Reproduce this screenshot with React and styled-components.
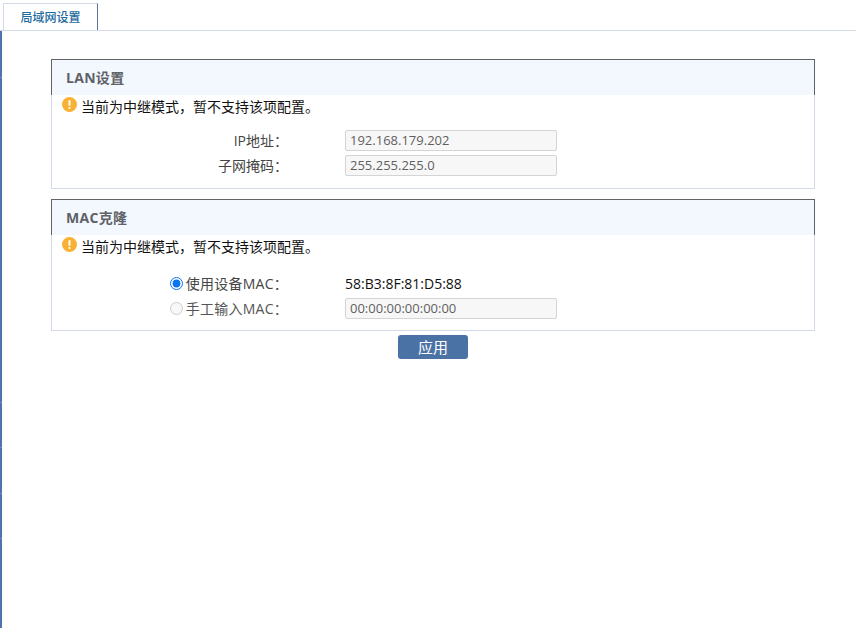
import React from "react";
import styled, { createGlobalStyle } from "styled-components";

const Global = createGlobalStyle`
  html, body { margin: 0; padding: 0; background: #fff; }
  body { font-family: "Open Sans", "Noto Sans CJK SC", sans-serif; font-size: 14px; color: #333; text-spacing-trim: space-all; }
`;
const Page = styled.div`height: 628px; width: 856px; overflow: hidden; display: flex; flex-direction: column;`;
const TabBar = styled.div`height: 31px; box-sizing: border-box; padding: 3px 0 0 3px; border-bottom: 1px solid #d5dbe6; display: flex;`;
const Tab = styled.div`
  width: 95px; height: 27px; box-sizing: border-box;
  border-top: 1px solid #d5dbe6; border-left: 1px solid #d5dbe6; border-right: 1px solid #5f7596;
  color: #1c6a9e; font-size: 12px; font-weight: 500; text-align: center; line-height: 25px;
  font-family: "Noto Sans CJK SC", sans-serif;
`;
const tick = (y) => `#4f74ad ${y}px, #7590bd ${y}px, #7590bd ${y + 1}px, #4f74ad ${y + 1}px`;
const Body = styled.div`
  flex: 1; padding: 28px 0 0 49px;
  border-left: 2px solid #4f74ad;
  border-image: linear-gradient(to bottom, ${[47, 371, 416, 461, 506].map(tick).join(", ")}) 1;
`;
const Panel = styled.section`
  width: 764px; box-sizing: border-box; height: ${p => p.$h}px; margin-bottom: 10px;
  border: 1px solid #d5dbe6; border-top: 0; display: flex; flex-direction: column;
`;
const PanelHead = styled.h2`
  margin: 0 -1px; height: 36px; box-sizing: border-box;
  background: #f3f7fe; border: 1px solid #5f6266; border-bottom: 0;
  font-size: 14px; font-weight: 700; color: #5f6266; padding-left: 14px; line-height: 35px; letter-spacing: 0.3px;
  font-family: "Open Sans", "Noto Sans CJK SC", sans-serif;
`;
const Notice = styled.div`
  display: flex; align-items: center; height: 21px; padding-left: 10px; gap: 4px; color: #111;
  font-size: 14px; font-family: "Noto Sans CJK SC", sans-serif;
  svg { margin-top: -2px; flex: none; }
`;
const Form = styled.div`padding-top: ${p => p.$top}px; display: flex; flex-direction: column; gap: 4px;`;
const Row = styled.div`display: flex; align-items: center; height: 21px;`;
const Label = styled.label`
  width: 236px; flex: none; font-size: 14px; line-height: 19px;
  display: flex; justify-content: flex-end; align-items: center;
  color: ${p => (p.$dim ? "#555" : "#444")};
  letter-spacing: ${p => (p.$wide ? "0.25px" : "0")};
`;
const Radio = styled.input`
  width: 13px; height: 13px; margin: 0 3px 0 0; accent-color: #0a75f0;
`;
const Field = styled.div`
  margin-left: 57px; width: 212px; height: 21px; box-sizing: border-box;
  background: #f7f7f7; border: 1px solid #d4d4d4; border-radius: 2px;
  color: #5f5f5f; font-size: 13px; line-height: 18px; padding-left: 4px;
`;
const Value = styled.div`margin-left: 57px; color: #111; font-size: 14px; line-height: 19px;`;
const Actions = styled.div`width: 764px; display: flex; justify-content: center; margin-top: -6px;`;
const Apply = styled.button`
  width: 70px; height: 24px; border: 0; border-radius: 3px; background: #4b72a5; color: #fff;
  font-size: 15px; font-family: "Noto Sans CJK SC", sans-serif; padding: 0; line-height: 24px;
`;

const Warn = () => (
  <svg width="15" height="15" viewBox="0 0 15 15">
    <circle cx="7.5" cy="7.5" r="7.5" fill="#f8b133" />
    <rect x="6.5" y="3" width="2" height="6" rx="1" fill="#fff" />
    <circle cx="7.5" cy="11" r="1.1" fill="#fff" />
  </svg>
);

export default function App() {
  return (
    <Page>
      <Global />
      <TabBar><Tab>局域网设置</Tab></TabBar>
      <Body>
        <Panel $h={130}>
          <PanelHead>LAN设置</PanelHead>
          <Notice><Warn />当前为中继模式，暂不支持该项配置。</Notice>
          <Form $top={14}>
            <Row><Label>IP地址：</Label><Field>192.168.179.202</Field></Row>
            <Row><Label>子网掩码：</Label><Field>255.255.255.0</Field></Row>
          </Form>
        </Panel>
        <Panel $h={132}>
          <PanelHead>MAC克隆</PanelHead>
          <Notice><Warn />当前为中继模式，暂不支持该项配置。</Notice>
          <Form $top={17}>
            <Row><Label $wide><Radio type="radio" name="m" defaultChecked />使用设备MAC：</Label><Value>58:B3:8F:81:D5:88</Value></Row>
            <Row><Label $wide $dim><Radio type="radio" name="m" disabled />手工输入MAC：</Label><Field>00:00:00:00:00:00</Field></Row>
          </Form>
        </Panel>
        <Actions><Apply>应用</Apply></Actions>
      </Body>
    </Page>
  );
}
